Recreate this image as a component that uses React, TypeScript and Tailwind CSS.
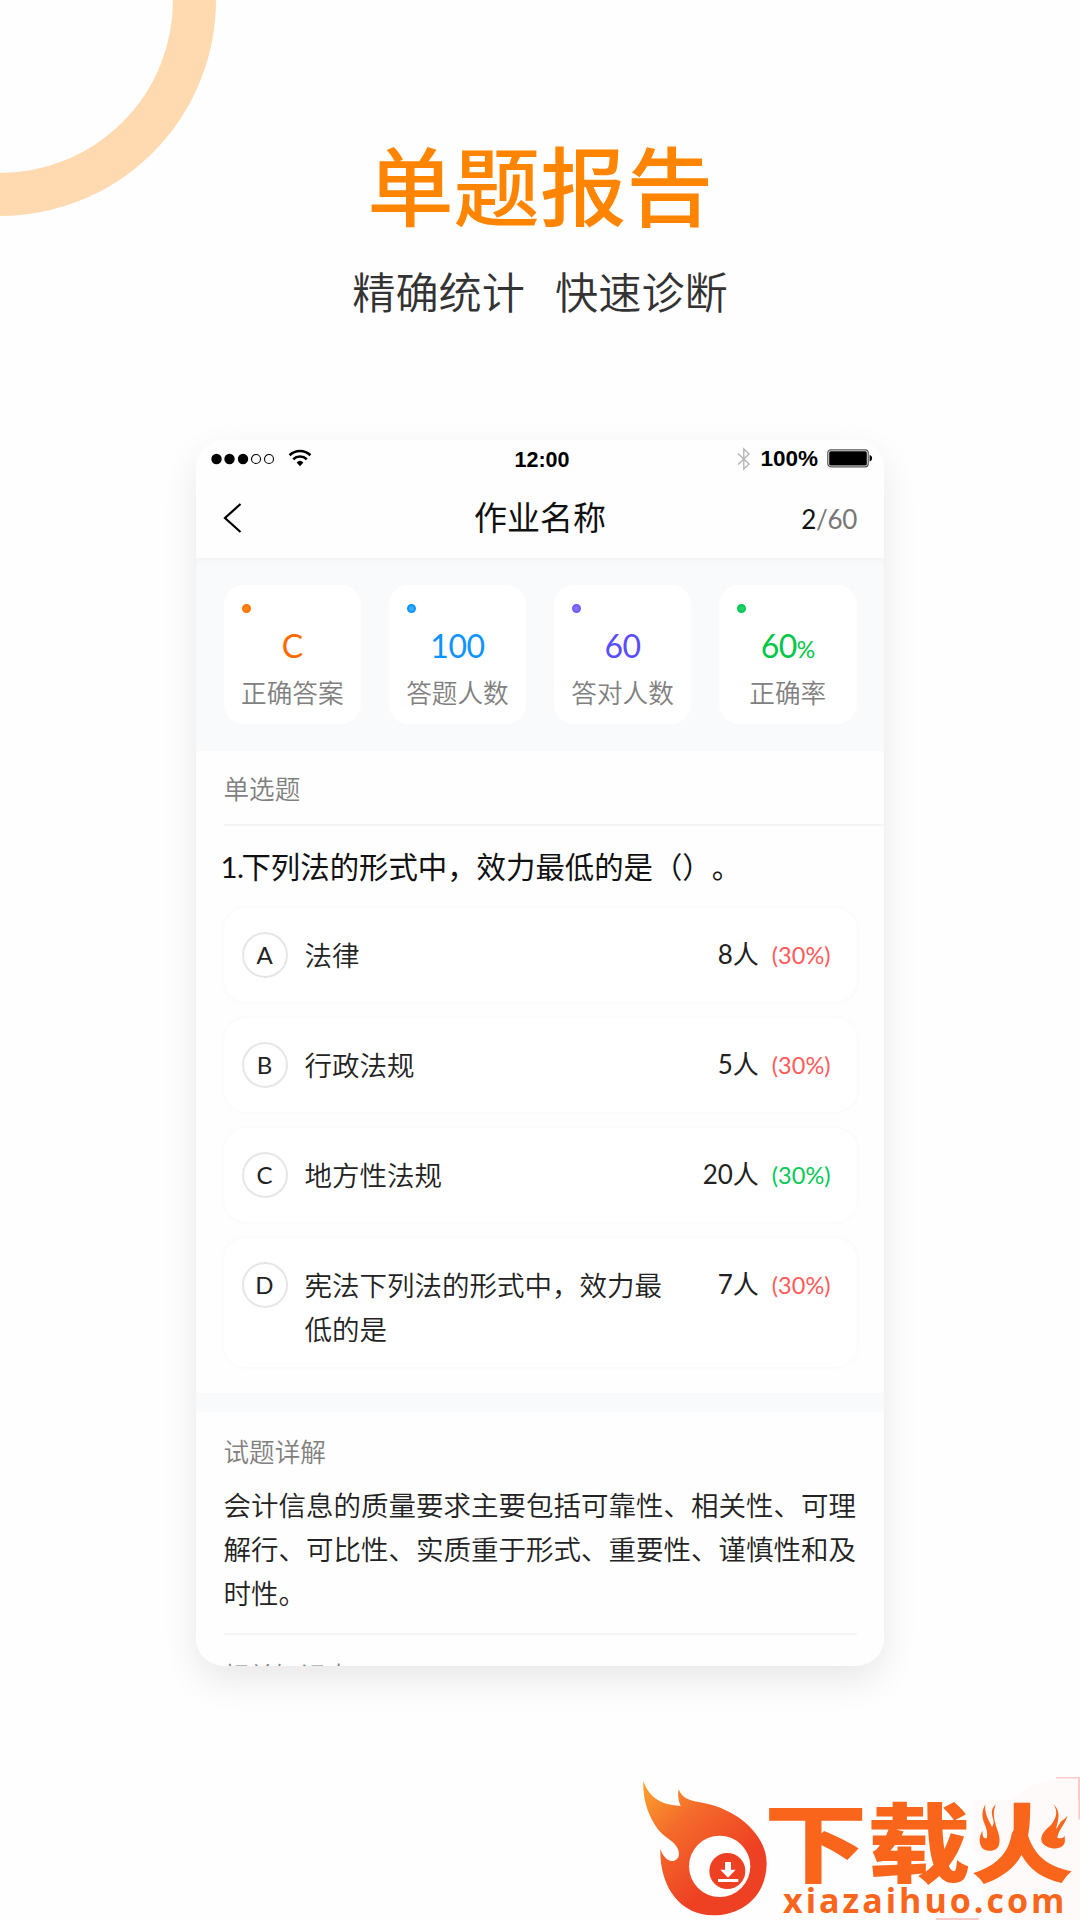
import type { ReactNode } from 'react'

const STATS: { label: string; value: string; unit?: string; color: string; dot: string }[] = [
  { label: '正确答案', value: 'C', color: 'text-[#ff6a00]', dot: 'bg-[#ff8410] border-[#ff7600]' },
  { label: '答题人数', value: '100', color: 'text-[#0e94ff]', dot: 'bg-[#3aaaff] border-[#0e94ff]' },
  { label: '答对人数', value: '60', color: 'text-[#5a4dff]', dot: 'bg-[#8074ff] border-[#6a5cff]' },
  { label: '正确率', value: '60', unit: '%', color: 'text-[#00c846]', dot: 'bg-[#1fd06a] border-[#00c850]' }
]

const OPTIONS = [
  { key: 'A', text: '法律', count: 8, percent: 30, correct: false },
  { key: 'B', text: '行政法规', count: 5, percent: 30, correct: false },
  { key: 'C', text: '地方性法规', count: 20, percent: 30, correct: true },
  { key: 'D', text: '宪法下列法的形式中，效力最低的是', count: 7, percent: 30, correct: false }
]

const EXPLANATION =
  '会计信息的质量要求主要包括可靠性、相关性、可理解行、可比性、实质重于形式、重要性、谨慎性和及时性。'

function StatusBar() {
  return (
    <div className="flex h-[37px] items-center pl-[15px] pr-[11px] font-['Liberation_Sans',sans-serif] text-[21.500px] font-bold text-black">
      <div className="flex flex-1 items-center">
        <svg width="64" height="12" viewBox="0 0 64 12">
          <circle cx="5.5" cy="6" r="5.2" />
          <circle cx="18.5" cy="6" r="5.2" />
          <circle cx="32" cy="6" r="5.2" />
          <circle cx="45" cy="6" r="4.5" fill="none" stroke="black" strokeWidth="1.1" />
          <circle cx="58" cy="6" r="4.5" fill="none" stroke="black" strokeWidth="1.1" />
        </svg>
        <svg className="-mt-[2px] ml-[13px]" width="24" height="18" viewBox="0 0 24 18" fill="none" stroke="black" strokeWidth="2.6">
          <path d="M1.6 6.2a15 15 0 0 1 20.8 0" />
          <path d="M5.2 10.2a9.8 9.8 0 0 1 13.6 0" />
          <path d="M8.6 13.4a5 5 0 0 1 6.8 0L12 17.2z" fill="black" stroke="none" />
        </svg>
      </div>
      <span className="mt-[4px]">12:00</span>
      <div className="flex flex-1 items-center justify-end">
        <svg width="14" height="24" viewBox="0 0 14 24" fill="none" stroke="#b5b5b5" strokeWidth="1.4">
          <path d="M1 6.5 12 17 6.8 22V2L12 7 1 17.5" />
        </svg>
        <span className="ml-[9px] mt-px text-[22.500px]">100%</span>
        <svg className="ml-[9px]" width="46" height="19" viewBox="0 0 46 19">
          <rect x="0.8" y="0.8" width="40.4" height="17" rx="3" fill="none" stroke="#555" strokeWidth="1.2" />
          <rect x="2.2" y="2.2" width="37.6" height="14.2" rx="1.5" />
          <path d="M42.6 6v6.6c3.4-1 3.4-5.600 0-6.600z" />
        </svg>
      </div>
    </div>
  )
}

function NavBar() {
  return (
    <div className="flex h-[81px] items-center px-[27px]">
      <div className="flex-1">
        <svg width="19" height="30" viewBox="0 0 19 30" fill="none" stroke="black" strokeWidth="2.2">
          <path d="M17.500 1 2 15l15.500 14" />
        </svg>
      </div>
      <h2 className="-mt-[3px] text-[33px] leading-none text-[#111]">作业名称</h2>
      <div className="mt-[3px] flex-1 text-right font-['Lato',sans-serif] text-[26px] leading-none tracking-[-0.3px] text-[#777]">
        <span className="text-[#111]">2</span>/60
      </div>
    </div>
  )
}

function SectionLabel({ children }: { children: ReactNode }) {
  return <div className="text-[25.600px] font-[350] leading-[38px] text-[#808080]">{children}</div>
}

function Stats() {
  return (
    <div className="grid h-[193px] grid-cols-4 gap-[27.500px] bg-[#f8fafc] px-[27.500px] pt-[27px] shadow-[inset_0_6px_6px_-4px_rgba(0,0,0,0.035)]">
      {STATS.map((stat) => (
        <div key={stat.label} className="relative flex h-[139px] flex-col items-center rounded-[20px] bg-white pt-[42px]">
          <span className={`absolute left-[18px] top-[18.500px] size-[9px] rounded-full border-2 ${stat.dot}`} />
          <div className={`h-[38px] font-['Lato',sans-serif] text-[32px] leading-[37px] tracking-[-0.5px] ${stat.color}`}>
            {stat.value}
            {stat.unit && <span className="text-[23px] leading-none">{stat.unit}</span>}
          </div>
          <div className="mt-[8px] whitespace-nowrap text-[25.600px] font-[350] leading-[38px] text-[#808080]">{stat.label}</div>
        </div>
      ))}
    </div>
  )
}

function Options() {
  return (
    <div className="flex flex-col gap-4">
      {OPTIONS.map((option) => (
        <div
          key={option.key}
          className="flex min-h-[94px] items-start rounded-[22px] bg-white px-[18px] pb-[17px] pt-[24px] shadow-[0_0_5px_rgba(0,0,0,0.035)]"
        >
          <div className="flex size-[46px] items-center justify-center rounded-full border-2 border-[#e6e6e6] font-['Lato',sans-serif] text-[24px] leading-none text-[#222]">
            {option.key}
          </div>
          <p className="ml-[17px] w-[362px] text-[27.500px] font-[350] leading-[44px] text-[#222]">{option.text}</p>
          <div className="ml-auto mr-[8px] flex items-baseline leading-[44px] text-[#222]">
            <span className="font-['Lato','Noto_Sans_CJK_SC',sans-serif] text-[26px]">{option.count}人</span>
            <span
              className={`ml-[13px] font-['Lato',sans-serif] text-[23.500px] ${option.correct ? 'text-[#07c957]' : 'text-[#ff5b5b]'}`}
            >
              ({option.percent}%)
            </span>
          </div>
        </div>
      ))}
    </div>
  )
}

function Watermark() {
  return (
    <div className="absolute bottom-0 right-0 h-[143px] w-[438px] text-[#f8651b]">
      <svg className="absolute inset-0" width="438" height="143" viewBox="642 1777 438 143">
        <defs>
          <linearGradient id="flame" x1="0" y1="0" x2="0.6" y2="0.75">
            <stop offset="0" stopColor="#fba52d" />
            <stop offset="0.45" stopColor="#f46a2b" />
            <stop offset="1" stopColor="#ee4023" />
          </linearGradient>
        </defs>
        <path d="M980 1857c5-45 40-79 96-80h4v143h-80c-15-15-22-35-20-63z" fill="#fffafa" />
        <path d="M1056 1777.500h23v42" fill="none" stroke="#fcc9c9" strokeWidth="2" />
        <path d="M936 1919h43" fill="none" stroke="#fcc9c9" strokeWidth="2" />
        <g transform="translate(630 1770) scale(.33333)">
          <path
            d="M40 34C55 72 80 105 152 108 144 90 143 75 146 58 158 90 185 92 225 100 330 122 410 200 410 280 410 370 345 436 250 436 150 436 88 350 91 236 98 258 115 278 133 272 150 265 150 245 140 230 125 205 100 205 75 165 50 125 38 80 40 34Z"
            fill="url(#flame)"
          />
          <circle cx="269" cy="289" r="92" fill="white" />
          <circle cx="292" cy="303" r="54" fill="#ee4023" />
          <path d="M285 276h18v23h14l-23 24-23-24h14zM264 327h61v9h-61z" fill="white" />
        </g>
      </svg>
      <div className="absolute left-[122px] top-[22px] origin-left scale-x-[1.2] whitespace-nowrap text-[86px] font-black leading-[80px]">
        下载火
      </div>
      {/* side strokes of the last character are replaced by small flames */}
      <svg className="absolute inset-0" width="438" height="143" viewBox="642 1777 438 143">
        <g transform="translate(970 1770) scale(.33333)">
          <path d="M10 90H131V180L92 243 10 250z" fill="#fffafa" />
          <path d="M190 90H325V240H225L190 205z" fill="#fffafa" />
          <path
            d="M78 103C60 118 66 135 70 150 72 160 70 165 66 170 58 155 42 130 46 103 34 125 36 145 44 162 50 178 54 190 50 205 42 206 36 200 38 182 28 196 26 215 34 230 42 245 78 250 87 225 94 200 80 180 76 160 70 140 70 120 78 103Z"
            fill="#f8651b"
          />
          <path
            d="M250 103C266 125 258 145 243 165 225 180 210 195 215 215 225 235 262 242 278 228 290 215 282 205 285 197 278 206 270 206 262 203 268 175 285 165 293 136 285 150 272 152 270 160 264 168 262 174 258 178 264 150 275 125 250 103Z"
            fill="#f8651b"
          />
        </g>
      </svg>
      <div className="absolute left-[141px] top-[105px] whitespace-nowrap font-['Open_Sans',sans-serif] text-[34px] font-bold leading-[36px] tracking-[3px]">
        xiazaihuo.com
      </div>
    </div>
  )
}

export default function App() {
  return (
    <div className="relative h-[1920px] w-[1080px] overflow-hidden bg-[#fefefe] font-['Noto_Sans_CJK_SC',sans-serif]">
      <div className="absolute -left-[216px] -top-[216px] size-[432px] rounded-full border-[43.500px] border-[#ffd9b0]" />

      <header className="flex flex-col items-center pt-[133px]">
        <h1 className="text-[86.400px] font-medium leading-[100px] text-[#ff8400]">单题报告</h1>
        <div className="mt-[31px] flex gap-[30px] text-[43.200px] font-[350] leading-[52px] text-[#333]">
          <span>精确统计</span>
          <span>快速诊断</span>
        </div>
      </header>

      <div className="mx-auto mt-[124px] h-[1226px] w-[688px] rounded-[28px] shadow-[0_14px_36px_rgba(0,0,0,0.09)]">
        <div className="h-full overflow-hidden rounded-[28px] bg-[#fefefe]">
          <StatusBar />
          <NavBar />
          <Stats />

          <div className="ml-[27.500px] flex h-[75px] items-center border-b-2 border-[#f5f5f5]">
            <SectionLabel>单选题</SectionLabel>
          </div>

          <div className="h-[567px] px-[27.500px] pt-[17px]">
            <h3 className="-ml-[3px] mb-[19px] whitespace-nowrap text-[29.400px] leading-[44px] text-[#111] [text-spacing-trim:space-all]">
              <span className="mr-[-2px] font-['Lato',sans-serif] tracking-[-0.5px]">1.</span>下列法的形式中，效力最低的是（）。
            </h3>
            <Options />
          </div>

          <div className="h-[19px] bg-[#f8fafc]" />

          <div className="px-[27.500px] pt-[20px]">
            <SectionLabel>试题详解</SectionLabel>
            <p className="mt-[12px] text-[27.500px] font-[350] leading-[44.200px] text-[#222]">{EXPLANATION}</p>
            <div className="mt-[18px] border-t-2 border-[#f5f5f5] pt-[21px]">
              <SectionLabel>相关知识点</SectionLabel>
            </div>
          </div>
        </div>
      </div>

      <Watermark />
    </div>
  )
}
